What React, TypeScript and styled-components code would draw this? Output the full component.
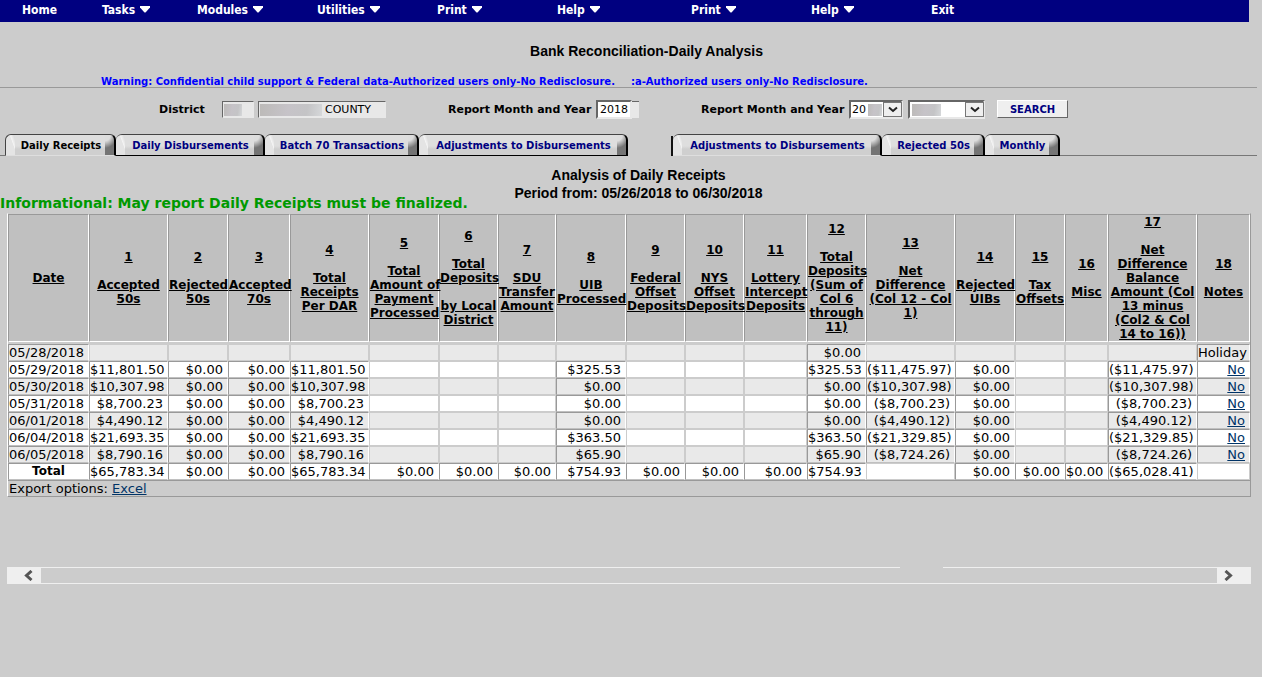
import React from "react";
import styled, { createGlobalStyle, css } from "styled-components";

const GlobalStyle = createGlobalStyle`
  * { box-sizing: border-box; }
  body {
    margin: 0;
    background: #ccc;
    color: #000;
    font-family: "DejaVu Sans", Verdana, sans-serif;
    font-size: 13px;
  }
`;

const Nav = styled.nav`
  display: flex;
  height: 22px;
  margin-right: 13px;
  padding-left: 22px;
  background: #000080;
`;

const NavItem = styled.a<{ $width: number }>`
  display: flex;
  align-items: center;
  gap: 5px;
  flex: 0 0 ${(p) => p.$width}px;
  padding-bottom: 3px;
  color: #fff;
  font: bold 12px/14px "DejaVu Sans Condensed", Tahoma, sans-serif;
  text-decoration: none;
  white-space: nowrap;
`;

const PageTitle = styled.h1`
  margin: 0;
  padding: 20px 0 15px 31px;
  font: bold 14px/18px "Liberation Sans", Arial, sans-serif;
  text-align: center;
`;

const Warning = styled.div`
  display: flex;
  gap: 16px;
  margin-right: 5px;
  padding-left: 101px;
  height: 13px;
  border-bottom: 1px solid #999;
  color: #0000ff;
  font-size: 10px;
  font-weight: bold;
  line-height: 14px;
  white-space: nowrap;
`;

const Filters = styled.form`
  display: flex;
  align-items: center;
  height: 42px;
  padding-left: 159px;
`;

const Label = styled.label<{ $width: number }>`
  flex: 0 0 ${(p) => p.$width}px;
  font-size: 11px;
  font-weight: bold;
  white-space: nowrap;
`;

const smudge = css`
  background-image: linear-gradient(100deg, #bcbab8, #c6c3c8 45%, #c4c4c6 75%, #d6d8da);
  background-repeat: no-repeat;
`;

const ReadOnly = styled.input<{ $width: number; $smudge: number; $after: number }>`
  width: ${(p) => p.$width}px;
  height: 17px;
  margin-right: ${(p) => p.$after}px;
  padding: 0 0 0 ${(p) => p.$smudge + 4}px;
  border: 1px solid #e8e8e8;
  border-top-color: #666;
  border-left-color: #666;
  border-radius: 0;
  background-color: #e8e8e8;
  ${smudge}
  background-position: 1px 2px;
  background-size: ${(p) => p.$smudge}px 12px;
  font: 11px "DejaVu Sans", Verdana, sans-serif;
`;

const YearBox = styled.div`
  display: flex;
  align-items: center;
  width: 105px;
`;

const YearInput = styled.input`
  width: 36px;
  height: 19px;
  padding: 0 2px;
  border: 2px solid #e8e8e8;
  border-top-color: #666;
  border-left-color: #666;
  background: #fff;
  font: 11px "DejaVu Sans", Verdana, sans-serif;
`;

const YearEdge = styled.span`
  width: 7px;
  height: 17px;
  border-top: 1px solid #666;
  background: #e8e8e8;
`;

const SelectBox = styled.div<{ $width: number }>`
  display: grid;
  width: ${(p) => p.$width}px;
  margin-right: 5px;
  > * { grid-area: 1 / 1; }
`;

const Select = styled.select<{ $from: number; $size: number }>`
  appearance: none;
  width: 100%;
  height: 19px;
  padding: 0 20px 0 1px;
  border: 2px solid #e8e8e8;
  border-top-color: #666;
  border-left-color: #666;
  border-radius: 0;
  background-color: #fff;
  ${smudge}
  background-position: ${(p) => p.$from}px 2px;
  background-size: ${(p) => p.$size}px 12px;
  font: 11px "DejaVu Sans", Verdana, sans-serif;
`;

const Drop = styled.span`
  display: grid;
  place-items: center;
  place-self: center end;
  width: 19px;
  height: 15px;
  margin-right: 1px;
  border: 1px solid #777;
  background: #efefef;
  pointer-events: none;
`;

const Search = styled.button`
  width: 71px;
  height: 18px;
  margin-left: 7px;
  padding: 0;
  border: 1px solid #fff;
  border-right-color: #666;
  border-bottom-color: #666;
  border-radius: 0;
  background: #efefef;
  color: #000080;
  font: bold 10px "DejaVu Sans", Verdana, sans-serif;
`;

const Tabs = styled.div`
  display: flex;
  align-items: flex-end;
  margin: 4px 5px 0 0;
`;

const Rule = styled.span<{ $width?: number }>`
  flex: ${(p) => (p.$width ? `0 0 ${p.$width}px` : "1")};
  height: 1px;
  background: #777;
`;

const Gap = styled.span`
  flex: 0 0 45px;
  height: 20px;
  border-right: 2px solid #111;
`;

const Tab = styled.button<{ $width: number; $current?: boolean; $open?: boolean; $first?: boolean }>`
  flex: 0 0 ${(p) => p.$width}px;
  height: 22px;
  padding: 1px 12px 0 14px;
  border: solid #444;
  border-width: 1px 2px 1px ${(p) => (p.$first ? 1 : 0)}px;
  border-right-color: #000;
  border-bottom-color: ${(p) => (p.$current || p.$open ? "transparent" : "#000")};
  border-radius: 6px 6px 0 0;
  background:
    radial-gradient(12px 13px at 0 0, #ddd 45%, #747474 100%) right / 9px 100% no-repeat,
    linear-gradient(70deg, #e4e4e4 65%, #f4f4f4 70%, #ddd 90%) left / 9px 100% no-repeat,
    linear-gradient(#dedede 55%, #cfcfcf 70%, #cfcfcf);
  color: ${(p) => (p.$current ? "#000" : "#000080")};
  font: bold 10px "DejaVu Sans", Verdana, sans-serif;
  white-space: nowrap;
`;

const Intro = styled.div`
  display: grid;
  padding-top: 10px;
  > * { grid-area: 1 / 1; }
`;

const ReportTitle = styled.h2`
  margin: 0;
  padding: 0 0 11px 15px;
  font: bold 14px/18px "Liberation Sans", Arial, sans-serif;
  text-align: center;
`;

const Info = styled.p`
  align-self: end;
  justify-self: start;
  margin: 0;
  color: #009900;
  font-size: 14px;
  font-weight: bold;
  line-height: 20px;
`;

const TableWrap = styled.div`
  margin: 0 11px 0 7px;
  border: 1px solid #fff;
  border-top-color: transparent;
  border-right-color: #999;
  border-bottom-color: #999;
`;

const Table = styled.table`
  width: 100%;
  table-layout: fixed;
  border-spacing: 0;
`;

const Head = styled.th`
  height: 128px;
  padding: 0;
  border: 1px solid #fff;
  border-top-color: #999;
  border-left-color: #999;
  background: #c0c0c0;
  font-size: 12px;
  line-height: 14px;
  white-space: pre;
  a { color: #000; }
`;

const Spacer = styled.td`
  height: 2px;
  padding: 0;
`;

const Cell = styled.td<{ $empty?: boolean; $align?: string; $bold?: boolean }>`
  height: 17px;
  padding: ${(p) => (p.$align ? "0" : "0 4px 0 0")};
  border: 1px solid;
  border-color: ${(p) => (p.$empty ? "#ccc" : "#999 #fff #c0c0c0 #999")};
  font-size: ${(p) => (p.$bold ? 12 : 13)}px;
  font-weight: ${(p) => (p.$bold ? "bold" : "normal")};
  line-height: 15px;
  text-align: ${(p) => p.$align ?? "right"};
  white-space: nowrap;
`;

const Row = styled.tr<{ $shade?: boolean }>`
  background: ${(p) => (p.$shade ? "#e9e9e9" : "#fff")};
`;

const Link = styled.a`
  color: #003366;
`;

const Export = styled.td`
  height: 16px;
  padding: 0 0 0 1px;
  border-top: 1px solid #999;
  line-height: 15px;
`;

const Scroll = styled.div`
  display: flex;
  height: 17px;
  margin: 70px 11px 0 7px;
`;

const Arrow = styled.button`
  display: grid;
  place-items: center;
  flex: 0 0 34px;
  padding: 0 0 0 8px;
  border: 0;
  background: #efefef;
  &:last-child { padding: 0 10px 0 0; }
`;

const Track = styled.div`
  display: flex;
  flex: 1;
  border-bottom: 1px solid #efefef;
`;

const TrackPart = styled.span<{ $grow: number; $plain?: boolean }>`
  flex: ${(p) => p.$grow} 1 0;
  border-top: 1px solid ${(p) => (p.$plain ? "#ccc" : "#efefef")};
`;

const nav: [string, number, boolean][] = [
  ["Home", 80, false],
  ["Tasks", 95, true],
  ["Modules", 120, true],
  ["Utilities", 120, true],
  ["Print", 120, true],
  ["Help", 134, true],
  ["Print", 120, true],
  ["Help", 120, true],
  ["Exit", 60, false],
];

const columns: [number, string][] = [
  [81, "Date"],
  [79, "1\n\nAccepted\n50s"],
  [60, "2\n\nRejected\n50s"],
  [62, "3\n\nAccepted\n70s"],
  [79, "4\n\nTotal\nReceipts\nPer DAR"],
  [70, "5\n\nTotal\nAmount of\nPayment\nProcessed"],
  [59, "6\n\nTotal\nDeposits\n\nby Local\nDistrict"],
  [58, "7\n\nSDU\nTransfer\nAmount"],
  [70, "8\n\nUIB\nProcessed"],
  [59, "9\n\nFederal\nOffset\nDeposits"],
  [59, "10\n\nNYS\nOffset\nDeposits"],
  [63, "11\n\nLottery\nIntercept\nDeposits"],
  [59, "12\n\nTotal\nDeposits\n(Sum of\nCol 6\nthrough\n11)"],
  [89, "13\n\nNet\nDifference\n(Col 12 - Col\n1)"],
  [60, "14\n\nRejected\nUIBs"],
  [50, "15\n\nTax\nOffsets"],
  [43, "16\n\nMisc"],
  [89, "17\n\nNet\nDifference\nBalance\nAmount (Col\n13 minus\n(Col2 & Col\n14 to 16))"],
  [53, "18\n\nNotes"],
];

const day = (date: string, total: string, uib: string, net: string) => [
  date, total, "$0.00", "$0.00", total, "", "", "", uib, "", "", "", uib, net, "$0.00", "", "", net, "No",
];

const rows: string[][] = [
  ["05/28/2018", "", "", "", "", "", "", "", "", "", "", "", "$0.00", "", "", "", "", "", "Holiday"],
  day("05/29/2018", "$11,801.50", "$325.53", "($11,475.97)"),
  day("05/30/2018", "$10,307.98", "$0.00", "($10,307.98)"),
  day("05/31/2018", "$8,700.23", "$0.00", "($8,700.23)"),
  day("06/01/2018", "$4,490.12", "$0.00", "($4,490.12)"),
  day("06/04/2018", "$21,693.35", "$363.50", "($21,329.85)"),
  day("06/05/2018", "$8,790.16", "$65.90", "($8,724.26)"),
];

const totals = [
  "Total", "$65,783.34", "$0.00", "$0.00", "$65,783.34", "$0.00", "$0.00", "$0.00", "$754.93",
  "$0.00", "$0.00", "$0.00", "$754.93", "", "$0.00", "$0.00", "$0.00", "($65,028.41)", "",
];

const Chevron = ({ d, w, h, stroke, thick }: { d: string; w: number; h: number; stroke: string; thick: number }) => (
  <svg width={w} height={h} viewBox={`0 0 ${w} ${h}`} fill="none" stroke={stroke} aria-hidden="true">
    <path d={d} strokeWidth={thick} />
  </svg>
);

const DropMark = () => (
  <Drop>
    <Chevron d="M1 1.5L5 5L9 1.5" w={10} h={7} stroke="#222" thick={2} />
  </Drop>
);

export default function App() {
  return (
    <>
      <GlobalStyle />
      <Nav>
        {nav.map(([name, width, menu], i) => (
          <NavItem key={i} href="#" $width={width}>
            {name}
            {menu && (
              <svg width="10" height="10" viewBox="0 0 10 10" aria-hidden="true">
                <path d="M0 1H10V2.5L5.5 7.5H4.5L0 2.5Z" fill="#fff" />
              </svg>
            )}
          </NavItem>
        ))}
      </Nav>

      <PageTitle>Bank Reconciliation-Daily Analysis</PageTitle>
      <Warning>
        <span>Warning: Confidential child support &amp; Federal data-Authorized users only-No Redisclosure.</span>
        <span>:a-Authorized users only-No Redisclosure.</span>
      </Warning>

      <Filters onSubmit={(e) => e.preventDefault()}>
        <Label htmlFor="district" $width={63}>District</Label>
        <ReadOnly id="district" readOnly $width={32} $smudge={18} $after={4} />
        <ReadOnly aria-label="County" readOnly defaultValue="COUNTY" $width={128} $smudge={62} $after={62} />
        <Label htmlFor="year" $width={148}>Report Month and Year</Label>
        <YearBox>
          <YearInput id="year" defaultValue="2018" />
          <YearEdge />
        </YearBox>
        <Label htmlFor="period" $width={148}>Report Month and Year</Label>
        <SelectBox $width={54}>
          <Select id="period" $from={17} $size={14}>
            <option>20</option>
          </Select>
          <DropMark />
        </SelectBox>
        <SelectBox $width={77}>
          <Select aria-label="Month" $from={2} $size={29}>
            <option></option>
          </Select>
          <DropMark />
        </SelectBox>
        <Search type="submit">SEARCH</Search>
      </Filters>

      <Tabs>
        <Rule $width={5} />
        <Tab $width={111} $current $first>Daily Receipts</Tab>
        <Tab $width={149}>Daily Disbursements</Tab>
        <Tab $width={154}>Batch 70 Transactions</Tab>
        <Tab $width={209}>Adjustments to Disbursements</Tab>
        <Gap />
        <Tab $width={209} $open>Adjustments to Disbursements</Tab>
        <Tab $width={103}>Rejected 50s</Tab>
        <Tab $width={75}>Monthly</Tab>
        <Rule />
      </Tabs>

      <Intro>
        <ReportTitle>
          Analysis of Daily Receipts
          <br />
          Period from: 05/26/2018 to 06/30/2018
        </ReportTitle>
        <Info>Informational: May report Daily Receipts must be finalized.</Info>
      </Intro>

      <TableWrap>
        <Table>
          <colgroup>
            {columns.map(([width], i) => (
              <col key={i} width={width} />
            ))}
          </colgroup>
          <thead>
            <tr>
              {columns.map(([, text], i) => (
                <Head key={i} scope="col">
                  <a href="#">{text}</a>
                </Head>
              ))}
            </tr>
          </thead>
          <tbody>
            <tr>
              <Spacer colSpan={19} />
            </tr>
            {rows.map((row, r) => (
              <Row key={r} $shade={r % 2 === 0}>
                {row.map((value, c) => (
                  <Cell key={c} $empty={!value} $align={c === 0 || value === "Holiday" ? "left" : undefined}>
                    {value === "No" ? <Link href="#">No</Link> : value}
                  </Cell>
                ))}
              </Row>
            ))}
            <Row>
              {totals.map((value, c) => (
                <Cell key={c} $empty={!value} $align={c === 0 ? "center" : undefined} $bold={c === 0}>
                  {value}
                </Cell>
              ))}
            </Row>
          </tbody>
          <tfoot>
            <tr>
              <Export colSpan={19}>
                Export options: <Link href="#">Excel</Link>
              </Export>
            </tr>
          </tfoot>
        </Table>
      </TableWrap>

      <Scroll>
        <Arrow type="button" aria-label="Scroll left">
          <Chevron d="M8.5 1L3.5 5.5L8.5 10" w={10} h={11} stroke="#555" thick={3} />
        </Arrow>
        <Track>
          <TrackPart $grow={859} />
          <TrackPart $grow={43} $plain />
          <TrackPart $grow={274} />
        </Track>
        <Arrow type="button" aria-label="Scroll right">
          <Chevron d="M1.5 1L6.5 5.5L1.5 10" w={10} h={11} stroke="#555" thick={3} />
        </Arrow>
      </Scroll>
    </>
  );
}
